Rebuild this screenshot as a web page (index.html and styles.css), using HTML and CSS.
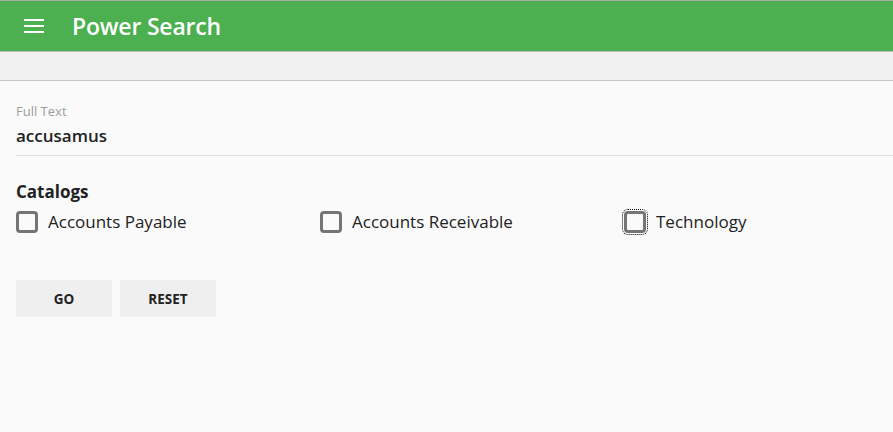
FILE: index.html
```html
<!DOCTYPE html>
<html lang="en">
  <head>
    <meta charset="UTF-8" />
    <meta name="viewport" content="width=device-width, initial-scale=1.0" />
    <title>Power Search</title>
    <link rel="stylesheet" href="styles.css">
  </head>
  <body>
    <header class="app-bar">
      <button class="menu-button" type="button" aria-label="Menu">
        <svg width="20" height="14" viewBox="0 0 20 14">
          <rect x="0" y="0" width="20" height="2" fill="#fff" />
          <rect x="0" y="6" width="20" height="2" fill="#fff" />
          <rect x="0" y="12" width="20" height="2" fill="#fff" />
        </svg>
      </button>
      <h1 class="app-title">Power Search</h1>
    </header>
    <div class="sub-bar"></div>

    <main class="content">
      <div class="field">
        <label class="field-label" for="fulltext">Full Text</label>
        <input id="fulltext" class="field-input" type="text" value="accusamus" />
      </div>

      <h2 class="section-title">Catalogs</h2>
      <div class="catalogs">
        <label class="catalog"><span class="box"></span>Accounts Payable</label>
        <label class="catalog"><span class="box"></span>Accounts Receivable</label>
        <label class="catalog"><span class="box focused"></span>Technology</label>
      </div>

      <div class="actions">
        <button class="flat-button" type="submit">GO</button>
        <button class="flat-button" type="reset">RESET</button>
      </div>
    </main>
  </body>
</html>
```
FILE: styles.css
```css
body {
  margin: 0;
  background-color: #fafafa;
  font-family: "Open Sans", "Noto Sans", sans-serif;
  color: #222;
}

.app-bar {
  display: flex;
  align-items: center;
  height: 50px;
  background-color: #4caf50;
  border-top: 1px solid #aaa;
  border-bottom: 1px solid #bdbdbd;
}
.menu-button {
  display: flex;
  align-items: center;
  justify-content: center;
  width: 20px;
  height: 20px;
  margin-left: 24px;
  padding: 0;
  border: none;
  background: none;
}
.app-title {
  margin: 0 0 0 28px;
  color: #fff;
  font-size: 23px;
  font-weight: 600;
  letter-spacing: -0.2px;
}

.sub-bar {
  height: 28px;
  background-color: #f0f0f0;
  border-bottom: 1px solid #c4c4c4;
}

.content {
  padding: 21px 0 0 16px;
}

.field {
  display: flex;
  flex-direction: column;
}
.field-label {
  font-size: 13px;
  color: #9e9e9e;
  line-height: 18px;
}
.field-input {
  margin-top: 4px;
  padding: 0 0 8px;
  border: none;
  border-bottom: 1px solid #ddd;
  background: none;
  font-family: inherit;
  font-size: 17px;
  font-weight: 600;
  color: #222;
  outline: none;
}

.section-title {
  margin: 25px 0 0;
  font-size: 17px;
  font-weight: 700;
  line-height: 22px;
}

.catalogs {
  display: grid;
  grid-template-columns: 304px 304px 1fr;
  margin-top: 8px;
}
.catalog {
  display: flex;
  align-items: center;
  gap: 10px;
  font-size: 17px;
  line-height: 22px;
}
.box {
  box-sizing: border-box;
  width: 22px;
  height: 22px;
  border: 3px solid #757575;
  border-radius: 4px;
}
.box.focused {
  outline: 1px dotted #000;
  outline-offset: 1px;
}

.actions {
  display: flex;
  gap: 8px;
  margin-top: 47px;
}
.flat-button {
  width: 96px;
  height: 37px;
  border: none;
  border-radius: 2px;
  background-color: #efefef;
  font-family: inherit;
  font-size: 13.5px;
  font-weight: 700;
  color: #222;
}
```
